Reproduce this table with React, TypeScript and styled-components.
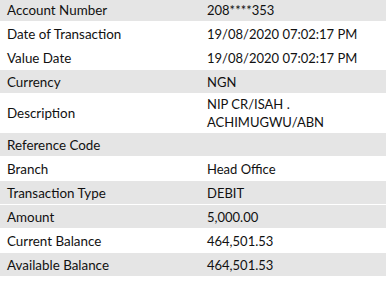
import React from "react";
import styled, { createGlobalStyle } from "styled-components";

const GlobalStyle = createGlobalStyle`
  html, body {
    margin: 0;
    padding: 0;
    background: #ffffff;
  }
  body {
    font-family: Lato, "Open Sans", sans-serif;
    color: #111111;
  }
`;

type Detail = {
  label: string;
  value: string;
  shaded?: boolean;
};

const details: Detail[] = [
  { label: "Account Number", value: "208****353", shaded: true },
  { label: "Date of Transaction", value: "19/08/2020 07:02:17 PM" },
  { label: "Value Date", value: "19/08/2020 07:02:17 PM" },
  { label: "Currency", value: "NGN", shaded: true },
  { label: "Description", value: "NIP CR/ISAH . ACHIMUGWU/ABN" },
  { label: "Reference Code", value: "", shaded: true },
  { label: "Branch", value: "Head Office" },
  { label: "Transaction Type", value: "DEBIT", shaded: true },
  { label: "Amount", value: "5,000.00", shaded: true },
  { label: "Current Balance", value: "464,501.53" },
  { label: "Available Balance", value: "464,501.53", shaded: true },
];

export default function App() {
  return (
    <>
      <GlobalStyle />
      <Table>
        {details.map((d) => (
          <Row key={d.label} $shaded={!!d.shaded}>
            <Label>{d.label}</Label>
            <Value>{d.value}</Value>
          </Row>
        ))}
      </Table>
    </>
  );
}

const Table = styled.div`
  width: 386px;
  display: flex;
  flex-direction: column;
  gap: 1px;
  margin-top: -2px;
`;

const Row = styled.div<{ $shaded: boolean }>`
  display: grid;
  grid-template-columns: 200px 1fr;
  align-items: center;
  min-height: 23px;
  padding: 1px 0;
  box-sizing: border-box;
  background: ${(p) => (p.$shaded ? "#e5e5e5" : "#ffffff")};
  line-height: 18px;
`;

const Label = styled.div`
  padding: 0 7px;
  font-size: 13.4px;
`;

const Value = styled.div`
  padding: 0 7px;
  font-size: 13px;
`;
